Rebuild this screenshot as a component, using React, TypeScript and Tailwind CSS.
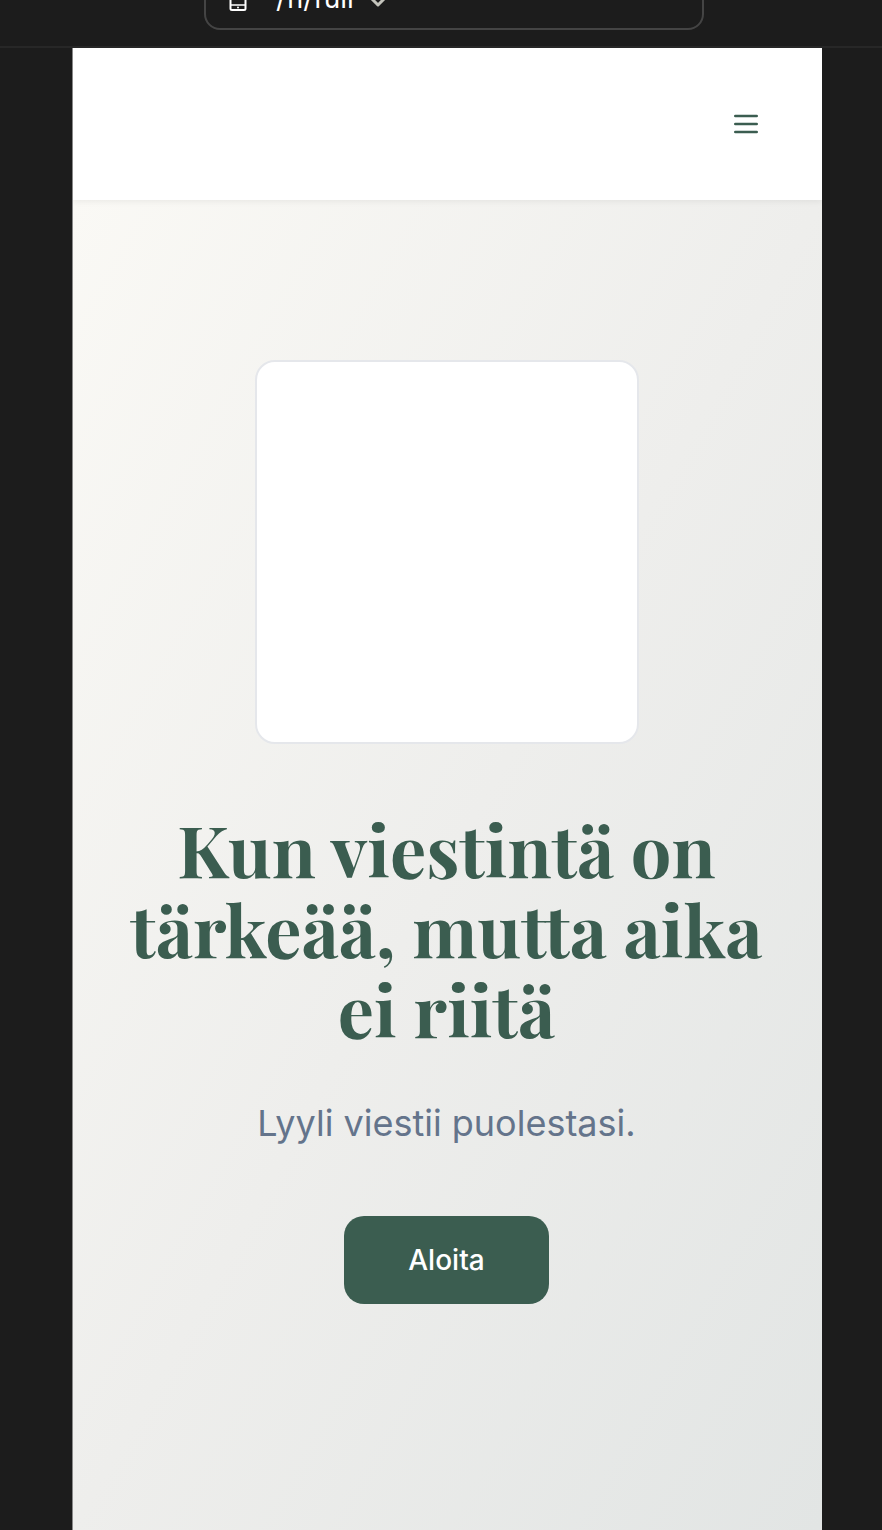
import { ChevronDown } from "lucide-react";

function TabletIcon() {
  return (
    <svg viewBox="0 0 24 24" className="size-6" fill="none" stroke="currentColor" strokeWidth="2" aria-hidden="true">
      <rect x="4.5" y="1" width="15" height="21" rx="1.5" />
      <path d="M4.5 17h15" strokeWidth="1.5" />
      <circle cx="12" cy="19.5" r="1" fill="currentColor" stroke="none" />
    </svg>
  );
}

function MenuIcon() {
  return (
    <svg viewBox="0 0 24 24" className="size-8" fill="none" stroke="currentColor" strokeWidth="2" strokeLinecap="round" aria-hidden="true">
      <path d="M4 6h16M4 12h16M4 18h16" />
    </svg>
  );
}

function AddressBar() {
  return (
    <div className="flex h-12 flex-col items-center justify-end overflow-hidden border-b-2 border-[#272727] pb-4 pl-[26px]">
      <div className="flex h-15 w-[500px] max-w-full shrink-0 items-center gap-[26px] rounded-2xl border-2 border-[#444444] px-5 text-white">
        <TabletIcon />
        <button type="button" className="flex items-end gap-3 pb-1 text-[28px] leading-8">
          /fi/full
          <ChevronDown className="size-6 text-[#c4c4bc]" strokeWidth={3} aria-hidden="true" />
        </button>
      </div>
    </div>
  );
}

function SiteHeader() {
  return (
    <header className="relative flex h-38 items-center justify-end bg-white px-15 shadow-[0_2px_6px_rgba(0,0,0,0.06)]">
      <button type="button" aria-label="Avaa valikko" className="text-[#3b5d50]">
        <MenuIcon />
      </button>
    </header>
  );
}

function Hero() {
  return (
    <main className="flex grow flex-col items-center bg-linear-to-br from-[#faf9f5] via-[#eeeeec] to-[#e2e5e4] pt-40 pr-12 pl-[46px] text-center">
      <div className="size-96 rounded-[20px] border-2 border-[#e5e7eb] bg-white" />
      <h1 className="mt-16 font-['Playfair_Display','Liberation_Serif',serif] text-[72px] leading-[80px] font-bold text-[#3b5d50]">
        Kun viestintä on tärkeää, mutta aika ei riitä
      </h1>
      <p className="mt-12 text-4xl leading-[54px] text-[#64748b]">Lyyli viestii puolestasi.</p>
      <button
        type="button"
        className="mt-[66px] rounded-[20px] bg-[#3b5d50] px-16 py-6 text-[28px] leading-10 font-medium text-white"
      >
        Aloita
      </button>
    </main>
  );
}

export default function App() {
  return (
    <div className="flex min-h-screen flex-col bg-[#1c1c1c] font-['Inter',sans-serif]">
      <AddressBar />
      <div className="mr-15 ml-18 flex grow flex-col overflow-hidden border-l border-[#888888]">
        <SiteHeader />
        <Hero />
      </div>
    </div>
  );
}
